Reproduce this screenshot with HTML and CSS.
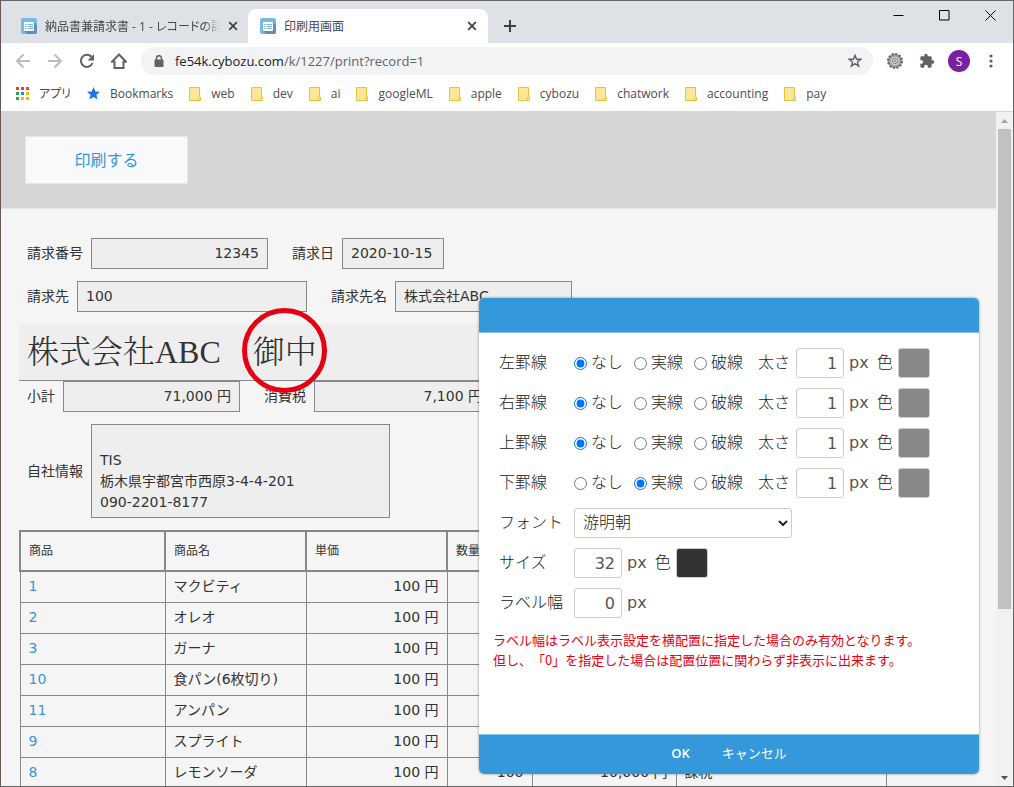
FILE: index.html
```
<!DOCTYPE html>
<html lang="ja">
<head>
  <meta charset="UTF-8" />
  <meta name="viewport" content="width=device-width, initial-scale=1" />
  <title>印刷用画面</title>
  <link rel="stylesheet" href="styles.css">
</head>
<body>
  <svg width="0" height="0" class="defs">
    <defs>
      <symbol id="app" viewBox="0 0 16 16">
        <rect width="16" height="16" rx="2" fill="#7ab9e0" />
        <path d="M13 4l3 3v7a2 2 0 0 1-2 2H6l-3-3z" fill="#5d93b8" />
        <rect x="3" y="4" width="10" height="9" rx="1" fill="#fff" />
        <path d="M4 6.500h1.500M6.500 6.500H12M4 8.500h1.500M6.500 8.500H12M4 10.500h1.500M6.500 10.500H12" stroke="#7ab9e0" />
      </symbol>
      <symbol id="cross" viewBox="0 0 10 10">
        <path d="M1.200 1.200l7.600 7.600M8.800 1.200L1.200 8.800" stroke="#3c4043" stroke-width="1.700" />
      </symbol>
      <symbol id="folder" viewBox="0 0 12 14">
        <path d="M.5.500h10v9.500h1v3.500H.5z" fill="#ffe694" stroke="#e9c23f" />
        <path d="M9.500 13V10.500" stroke="#e9c23f" />
      </symbol>
    </defs>
  </svg>

  <div class="window">
    <div class="tabs">
      <div class="tab">
        <svg class="favicon"><use href="#app" /></svg>
        <span class="tab-title">納品書兼請求書 - 1 - レコードの詳細</span>
        <button class="tab-close" aria-label="タブを閉じる"><svg><use href="#cross" /></svg></button>
      </div>
      <div class="tab active">
        <svg class="favicon"><use href="#app" /></svg>
        <span class="tab-title">印刷用画面</span>
        <button class="tab-close" aria-label="タブを閉じる"><svg><use href="#cross" /></svg></button>
      </div>
      <button class="new-tab" aria-label="新しいタブ">
        <svg width="12" height="12"><path d="M6 0v12M0 6h12" stroke="#3c4043" stroke-width="2" /></svg>
      </button>
      <div class="window-buttons">
        <button aria-label="最小化"><svg width="11" height="11"><path d="M.5 5.500h10" stroke="#000" /></svg></button>
        <button aria-label="最大化"><svg width="11" height="11"><path d="M.5.500h9.500v9.500H.5z" fill="none" stroke="#000" /></svg></button>
        <button aria-label="閉じる"><svg width="11" height="11"><path d="M.5.500l10 10M10.500.500l-10 10" stroke="#000" /></svg></button>
      </div>
    </div>

    <div class="toolbar">
      <button class="tool" aria-label="戻る">
        <svg viewBox="0 0 16 16"><path d="M15 8H2M8.500 1.500L2 8l6.500 6.500" fill="none" stroke="#babcbe" stroke-width="2" /></svg>
      </button>
      <button class="tool" aria-label="進む">
        <svg viewBox="0 0 16 16"><path d="M1 8h13M7.500 1.500L14 8l-6.500 6.500" fill="none" stroke="#babcbe" stroke-width="2" /></svg>
      </button>
      <button class="tool" aria-label="再読み込み">
        <svg viewBox="0 0 16 16"><path d="M13.500 10a6 6 0 1 1-1.200-6.200" fill="none" stroke="#5f6368" stroke-width="2" /><path d="M15 1v6.500H8.500z" fill="#5f6368" /></svg>
      </button>
      <button class="tool" aria-label="ホーム">
        <svg viewBox="0 0 16 16"><path d="M1 8.700L8 1.500l7 7.200h-2.500V15h-9V8.700z" fill="none" stroke="#5f6368" stroke-width="2" /></svg>
      </button>
      <div class="address">
        <svg width="10" height="12" viewBox="0 0 10 12"><path d="M2.500 5V3.200a2.500 2.500 0 0 1 5 0V5" fill="none" stroke="#5f6368" stroke-width="1.500" /><rect x=".5" y="4.500" width="9" height="7.500" rx="1" fill="#5f6368" /></svg>
        <span class="url">fe54k.cybozu.com<span>/k/1227/print?record=1</span></span>
        <button class="bookmark" aria-label="ブックマークに追加">
          <svg width="14" height="14" viewBox="0 0 14 14"><path d="M7 1.200l1.600 4h4.300L9.500 7.900l1.200 4.300L7 9.700l-3.700 2.500 1.200-4.300L1.100 5.200h4.300z" fill="none" stroke="#5f6368" stroke-width="1.400" /></svg>
        </button>
      </div>
      <button class="tool" aria-label="歯車">
        <svg viewBox="0 0 16 16">
          <circle cx="8" cy="8" r="7" fill="#999" stroke="#666" stroke-width="2" stroke-dasharray="2.200 1.465" />
          <circle cx="8" cy="8" r="5" fill="#ccc" stroke="#999" />
          <circle cx="8" cy="8" r="2.500" fill="#eee" stroke="#777" />
          <circle cx="8" cy="8" r="1" fill="#777" />
        </svg>
      </button>
      <button class="tool" aria-label="拡張機能">
        <svg viewBox="0 0 24 24"><path fill="#5f6368" d="M20.500 11H19V7c0-1.100-.9-2-2-2h-4V3.500a2.500 2.500 0 0 0-5 0V5H4c-1.100 0-2 .9-2 2v3.800h1.500a2.700 2.700 0 0 1 0 5.400H2V20c0 1.100.9 2 2 2h3.800v-1.500a2.700 2.700 0 0 1 5.400 0V22H17c1.100 0 2-.9 2-2v-4h1.500a2.500 2.500 0 0 0 0-5z" /></svg>
      </button>
      <button class="tool avatar">S</button>
      <button class="tool" aria-label="メニュー">
        <svg viewBox="0 0 16 16" fill="#5f6368"><circle cx="8" cy="3" r="1.600" /><circle cx="8" cy="8" r="1.600" /><circle cx="8" cy="13" r="1.600" /></svg>
      </button>
    </div>

    <nav class="bookmarks">
      <a href="#">
        <svg width="13" height="13">
          <path d="M0 0h3v3H0zM5 0h3v3H5zM10 0h3v3h-3z" fill="#f13b35" />
          <path d="M0 5h3v3H0zM0 10h3v3H0z" fill="#2fa35a" />
          <path d="M5 5h3v3H5z" fill="#1a8cf0" />
          <path d="M10 5h3v3h-3zM5 10h3v3H5zM10 10h3v3h-3z" fill="#fbb40b" />
        </svg>アプリ</a>
      <a href="#"><svg width="13" height="13" viewBox="0 0 13 13"><path d="M6.500 0l1.800 4.500 4.700.3-3.600 3 1.200 4.700-4.100-2.600-4.100 2.600 1.200-4.700L0 4.800l4.700-.3z" fill="#1a73e8" /></svg>Bookmarks</a>
      <a href="#"><svg class="folder"><use href="#folder" /></svg>web</a>
      <a href="#"><svg class="folder"><use href="#folder" /></svg>dev</a>
      <a href="#"><svg class="folder"><use href="#folder" /></svg>ai</a>
      <a href="#"><svg class="folder"><use href="#folder" /></svg>googleML</a>
      <a href="#"><svg class="folder"><use href="#folder" /></svg>apple</a>
      <a href="#"><svg class="folder"><use href="#folder" /></svg>cybozu</a>
      <a href="#"><svg class="folder"><use href="#folder" /></svg>chatwork</a>
      <a href="#"><svg class="folder"><use href="#folder" /></svg>accounting</a>
      <a href="#"><svg class="folder"><use href="#folder" /></svg>pay</a>
    </nav>

    <div class="viewport">
      <main class="page">
        <div class="print-bar">
          <button class="print">印刷する</button>
        </div>
        <div class="record">
          <div class="row">
            <div class="field"><span>請求番号</span><span class="value number">12345</span></div>
            <div class="field"><span>請求日</span><span class="value date">2020-10-15</span></div>
          </div>
          <div class="row">
            <div class="field"><span>請求先</span><span class="value lookup">100</span></div>
            <div class="field"><span>請求先名</span><span class="value">株式会社ABC</span></div>
          </div>
          <div class="customer">株式会社ABC　<span class="marked">御中</span></div>
          <div class="row">
            <div class="field"><span>小計</span><span class="value number">71,000 円</span></div>
            <div class="field"><span>消費税</span><span class="value number">7,100 円</span></div>
          </div>
          <div class="row">
            <div class="field"><span>自社情報</span><span class="value company"><br>TIS<br>栃木県宇都宮市西原3-4-4-201<br>090-2201-8177</span></div>
          </div>
          <table class="items">
            <colgroup>
              <col class="c-code"><col class="c-name"><col class="c-price"><col class="c-qty"><col class="c-total"><col class="c-tax">
            </colgroup>
            <thead>
              <tr><th>商品</th><th>商品名</th><th>単価</th><th>数量</th><th>金額</th><th>税区分</th></tr>
            </thead>
            <tbody>
              <tr><td><a href="#">1</a></td><td>マクビティ</td><td class="num">100 円</td><td class="num">100</td><td class="num">10,000 円</td><td>課税</td></tr>
              <tr><td><a href="#">2</a></td><td>オレオ</td><td class="num">100 円</td><td class="num">100</td><td class="num">10,000 円</td><td>課税</td></tr>
              <tr><td><a href="#">3</a></td><td>ガーナ</td><td class="num">100 円</td><td class="num">100</td><td class="num">10,000 円</td><td>課税</td></tr>
              <tr><td><a href="#">10</a></td><td>食パン(6枚切り)</td><td class="num">100 円</td><td class="num">100</td><td class="num">10,000 円</td><td>課税</td></tr>
              <tr><td><a href="#">11</a></td><td>アンパン</td><td class="num">100 円</td><td class="num">100</td><td class="num">10,000 円</td><td>課税</td></tr>
              <tr><td><a href="#">9</a></td><td>スプライト</td><td class="num">100 円</td><td class="num">100</td><td class="num">10,000 円</td><td>課税</td></tr>
              <tr><td><a href="#">8</a></td><td>レモンソーダ</td><td class="num">100 円</td><td class="num">100</td><td class="num">10,000 円</td><td>課税</td></tr>
            </tbody>
          </table>
        </div>
      </main>
      <div class="scrollbar">
        <svg width="17" height="17"><path d="M5 11l3.500-4 3.500 4z" fill="#a3a3a3" /></svg>
        <div class="track"><div class="thumb"></div></div>
        <svg width="17" height="17"><path d="M5 7l3.500 4L12 7z" fill="#505050" /></svg>
      </div>
    </div>

    <form class="dialog">
      <div class="dialog-head"></div>
      <div class="dialog-body">
        <div class="setting">
          <span class="name">左罫線</span>
          <label><input type="radio" name="left" checked>なし</label>
          <label><input type="radio" name="left">実線</label>
          <label><input type="radio" name="left">破線</label>
          <label class="size">太さ<input type="text" value="1"></label><span class="unit">px</span>
          <label class="color">色<button type="button" class="swatch"></button></label>
        </div>
        <div class="setting">
          <span class="name">右罫線</span>
          <label><input type="radio" name="right" checked>なし</label>
          <label><input type="radio" name="right">実線</label>
          <label><input type="radio" name="right">破線</label>
          <label class="size">太さ<input type="text" value="1"></label><span class="unit">px</span>
          <label class="color">色<button type="button" class="swatch"></button></label>
        </div>
        <div class="setting">
          <span class="name">上罫線</span>
          <label><input type="radio" name="top" checked>なし</label>
          <label><input type="radio" name="top">実線</label>
          <label><input type="radio" name="top">破線</label>
          <label class="size">太さ<input type="text" value="1"></label><span class="unit">px</span>
          <label class="color">色<button type="button" class="swatch"></button></label>
        </div>
        <div class="setting">
          <span class="name">下罫線</span>
          <label><input type="radio" name="bottom">なし</label>
          <label><input type="radio" name="bottom" checked>実線</label>
          <label><input type="radio" name="bottom">破線</label>
          <label class="size">太さ<input type="text" value="1"></label><span class="unit">px</span>
          <label class="color">色<button type="button" class="swatch"></button></label>
        </div>
        <div class="setting">
          <label class="name" for="font">フォント</label>
          <div class="select">
            <select id="font"><option>游明朝</option></select>
            <svg width="10" height="6"><path d="M1 1l4 4 4-4" fill="none" stroke="#222" stroke-width="2" /></svg>
          </div>
        </div>
        <div class="setting">
          <label class="name" for="size">サイズ</label>
          <input type="text" id="size" value="32"><span class="unit">px</span>
          <label class="color">色<button type="button" class="swatch dark"></button></label>
        </div>
        <div class="setting">
          <label class="name" for="label-width">ラベル幅</label>
          <input type="text" id="label-width" value="0"><span class="unit">px</span>
        </div>
        <p class="note">ラベル幅はラベル表示設定を横配置に指定した場合のみ有効となります。<br>但し、「0」を指定した場合は配置位置に関わらず非表示に出来ます。</p>
      </div>
      <div class="dialog-foot">
        <button type="button" class="ok">OK</button>
        <button type="button">キャンセル</button>
      </div>
    </form>
  </div>
</body>
</html>
```
FILE: styles.css
```
*, *::after { box-sizing: border-box; }

body {
  margin: 0;
  color: #333;
  font-family: "DejaVu Sans", "Noto Sans CJK JP", sans-serif;
  font-size: 14px;
  line-height: 21px;
}

button, input, select {
  margin: 0;
  padding: 0;
  font: inherit;
  color: inherit;
}
button {
  border: none;
  background: none;
  cursor: pointer;
}
svg { display: block; flex: none; }
.defs { position: absolute; }

.window {
  position: relative;
  display: flex;
  flex-direction: column;
  height: 100vh;
  border: 1px solid #666;
  border-left-color: #6b5555;
  background: #fff;
  overflow: hidden;
}

/* browser frame */
.tabs, .toolbar, .bookmarks {
  display: flex;
  flex: none;
  font-family: "Open Sans", "Noto Sans CJK JP", sans-serif;
  font-size: 12px;
}
.tabs {
  height: 42px;
  background: #dee1e6;
}
.tab {
  display: flex;
  align-items: center;
  width: 240px;
  margin-top: 8px;
  padding: 0 11px 0 12px;
  gap: 8px;
}
.tab:first-child {
  width: 247px;
  padding-left: 20px;
  padding-right: 10px;
}
.tab.active {
  background: #fff;
  border-radius: 8px 8px 0 0;
}
.favicon { width: 16px; height: 16px; }
.tab-title {
  flex: 1;
  overflow: hidden;
  color: #45484c;
  white-space: nowrap;
  font-feature-settings: "palt";
}
.tab:first-child .tab-title {
  -webkit-mask-image: linear-gradient(to left, transparent, #000 16px);
  mask-image: linear-gradient(to left, transparent, #000 16px);
}
.tab-close svg { width: 10px; height: 10px; }
.new-tab {
  width: 44px;
  margin-top: 8px;
  display: grid;
  place-items: center;
}
.window-buttons {
  display: flex;
  margin-left: auto;
}
.window-buttons button {
  display: grid;
  place-items: center;
  width: 46px;
  height: 28px;
}

.toolbar {
  align-items: center;
  height: 36px;
  padding: 0 6px;
}
.tool {
  display: grid;
  place-items: center;
  width: 32px;
  height: 32px;
}
.tool svg { width: 16px; height: 16px; }
.address {
  display: flex;
  align-items: center;
  flex: 1;
  height: 28px;
  margin: 0 6px;
  padding: 0 11px 0 13px;
  gap: 11px;
  border-radius: 14px;
  background: #f1f3f4;
}
.url {
  flex: 1;
  color: #202124;
  font-size: 13px;
}
.url span { color: #5f6368; }
.avatar {
  width: 22px;
  height: 22px;
  margin: 0 5px;
  border-radius: 50%;
  background: #7b1fa2;
  color: #fff;
}

.bookmarks {
  align-items: center;
  height: 33px;
  padding: 0 15px 3px;
  gap: 16px;
  color: #4a4d51;
  border-bottom: 1px solid #d5d8da;
}
.bookmarks a {
  display: flex;
  align-items: center;
  gap: 10px;
  color: inherit;
  text-decoration: none;
  font-feature-settings: "palt";
}
.folder { width: 12px; height: 14px; }

/* print page */
.viewport {
  display: flex;
  flex: 1;
  min-height: 0;
}
.page {
  flex: 1;
  min-width: 0;
  overflow: hidden;
  background: #f5f5f5;
}
.print-bar {
  padding: 24px;
  border-bottom: 1px solid #e3e7e8;
  background: #d4d6d7;
}
.print {
  display: block;
  width: 163px;
  height: 48px;
  border: 1px solid #e3e7e8;
  background: #f7f9fa;
  color: #3498db;
  font-size: 16px;
}
.record {
  display: flex;
  flex-direction: column;
  align-items: flex-start;
  padding: 29px 18px 0;
}
.row {
  display: flex;
  gap: 24px;
  margin-bottom: 12px;
  padding-left: 8px;
}
.field {
  display: flex;
  align-items: center;
  gap: 8px;
  white-space: nowrap;
}
.value {
  width: 177px;
  padding: 4px 8px;
  border: 1px solid #888;
  background: #eee;
}
.value.number { text-align: right; }
.value.date { width: 102px; }
.value.lookup { width: 230px; }
.value.company { width: 299px; }

.customer {
  width: 867px;
  padding: 4px 8px;
  border-bottom: 1px solid #888;
  background: #eee;
  font-family: "Liberation Serif", "Noto Serif CJK JP", "Noto Sans CJK JP", serif;
  font-size: 32px;
  font-weight: 300;
  line-height: 48px;
  white-space: nowrap;
}
.marked { position: relative; }
.marked::after {
  content: "";
  position: absolute;
  top: 50%;
  left: 50%;
  width: 85px;
  height: 85px;
  margin: -44px 0 0 -43px;
  border: 5px solid #e60012;
  border-radius: 50%;
}

.items {
  border-collapse: collapse;
  table-layout: fixed;
  width: 867px;
}
.c-code { width: 145px; }
.c-name { width: 141px; }
.c-price { width: 141px; }
.c-qty { width: 85px; }
.c-total { width: 144px; }
.c-tax { width: 210px; }
.items th {
  height: 40px;
  padding: 0 8px;
  border: 2px solid #888;
  font-size: 12px;
  font-weight: 400;
  text-align: left;
}
.items td {
  height: 31px;
  padding: 0 8px;
  border: 1px solid #888;
}
.items .num { text-align: right; }
.items a {
  color: #3498db;
  text-decoration: none;
}

.scrollbar {
  display: flex;
  flex-direction: column;
  width: 17px;
  background: #f1f1f1;
}
.track { flex: 1; }
.thumb {
  height: 75%;
  margin: 0 2px;
  background: #c1c1c1;
}

/* style dialog */
.dialog {
  position: absolute;
  top: 297px;
  right: 34px;
  width: 500px;
  border-radius: 5px;
  background: #fff;
  box-shadow: 0 0 3px rgba(0, 0, 0, 0.4);
  font-size: 16px;
  line-height: 24px;
  overflow: hidden;
}
.dialog-head {
  height: 35px;
  border-bottom: 1px solid #85c1e9;
  background: #3498db;
}
.dialog-body {
  height: 401px;
  padding: 10px 20px;
}
.setting {
  display: flex;
  align-items: center;
  height: 40px;
  color: #222;
  font-weight: 300;
  white-space: nowrap;
}
.setting .name { width: 75px; margin: 0; }
.setting label {
  display: flex;
  align-items: center;
  margin-right: 11px;
}
.setting input[type="radio"] {
  width: 13px;
  height: 13px;
  margin-right: 4px;
}
.setting label.size { margin: 0 5px 0 4px; gap: 6px; }
.setting label.color { margin: 0 0 0 8px; gap: 5px; }
.setting input[type="text"] {
  width: 48px;
  height: 30px;
  padding: 0 6px;
  border: 1px solid #ccc;
  border-radius: 3px;
  background: #fff;
  color: #555;
  font-weight: 400;
  text-align: right;
}
.unit {
  color: #555;
  font-weight: 400;
}
.setting input + .unit { margin-left: 5px; }
.swatch {
  width: 32px;
  height: 30px;
  border: 1px solid #ccc;
  border-radius: 3px;
  background: #888;
}
.swatch.dark { background: #333; }
.select {
  display: grid;
  align-items: center;
  width: 218px;
}
.select select, .select svg { grid-area: 1 / 1; }
.select select {
  appearance: none;
  height: 30px;
  padding: 0 8px;
  border: 1px solid #ccc;
  border-radius: 3px;
  background: #fff;
}
.select svg {
  justify-self: end;
  margin-right: 4px;
  pointer-events: none;
}
.note {
  margin: 7px -6px 0;
  color: #e60012;
  font-family: "Noto Sans CJK JP", sans-serif;
  font-size: 13px;
  line-height: 20px;
  text-spacing-trim: space-all;
}
.dialog-foot {
  display: flex;
  justify-content: center;
  gap: 32px;
  height: 40px;
  padding-bottom: 4px;
  border-top: 1px solid #85c1e9;
  background: #3498db;
  color: #fff;
  font-family: "Open Sans", "Noto Sans CJK JP", sans-serif;
  font-size: 13px;
}
.ok { font-weight: 600; }
```
